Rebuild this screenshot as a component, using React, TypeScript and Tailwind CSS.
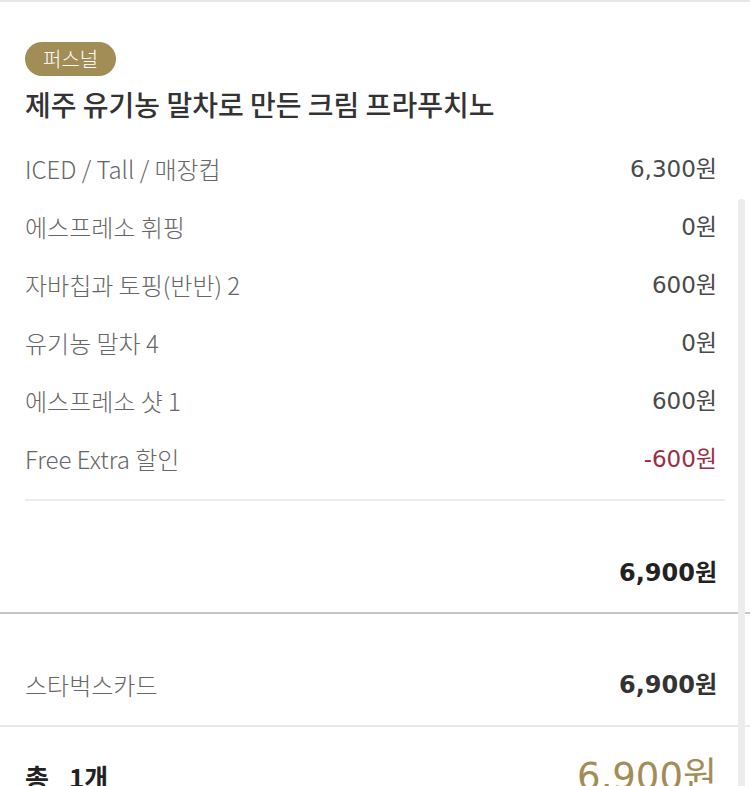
const kr = "font-['Noto_Sans_CJK_KR','Noto_Sans',sans-serif]";
const num = "font-['DejaVu_Sans','Noto_Sans_CJK_KR',sans-serif]";

const options = [
  { label: "ICED / Tall / 매장컵", price: "6,300원" },
  { label: "에스프레소 휘핑", price: "0원" },
  { label: "자바칩과 토핑(반반) 2", price: "600원" },
  { label: "유기농 말차 4", price: "0원" },
  { label: "에스프레소 샷 1", price: "600원" },
  { label: "Free Extra 할인", price: "-600원", discount: true },
];

export default function App() {
  return (
    <div className={`relative w-[750px] h-[786px] overflow-hidden bg-white ${kr}`}>
      <div className="h-[2px] bg-[#e6e6e6]" />

      {/* Order item */}
      <section className="px-[25px] pt-[40px]">
        <span className="inline-flex h-[34px] items-center rounded-full bg-[#a38d56] px-[18px] text-[20px] font-light text-white">
          퍼스널
        </span>
        <h2 className="mt-[11px] text-[28px] leading-[34px] font-medium text-[#333]">
          제주 유기농 말차로 만든 크림 프라푸치노
        </h2>

        <ul className="mt-[19px] pr-[8px]">
          {options.map((o) => (
            <li key={o.label} className="flex h-[58px] items-center justify-between text-[24px] font-light">
              <span className="text-[#666]">{o.label}</span>
              <span className={`${num} text-[23px] font-normal ${o.discount ? "text-[#9c2c44]" : "text-[#4a4a4a]"}`}>
                {o.price}
              </span>
            </li>
          ))}
        </ul>

        <div className="mt-[11px] h-[2px] bg-[#ececec]" />
        <div className="flex h-[111px] items-center justify-end pr-[8px] pt-[32px]">
          <span className={`${num} text-[24px] font-bold text-[#222]`}>6,900원</span>
        </div>
      </section>

      <div className="h-[2px] bg-[#c6c6c6]" />

      {/* Payment */}
      <div className="flex h-[111px] items-center justify-between pl-[25px] pr-[33px] pt-[30px]">
        <span className="text-[24px] font-light text-[#666]">스타벅스카드</span>
        <span className={`${num} text-[24px] font-bold text-[#333]`}>6,900원</span>
      </div>
      <div className="h-[2px] bg-[#e9e9e9]" />

      {/* Total */}
      <div className="flex items-center justify-between pl-[25px] pr-[33px] pt-[22px]">
        <span className="text-[26px] font-bold text-[#222]">
          총<span className="ml-[20px]">1개</span>
        </span>
        <span className={`${num} text-[37px] text-[#a38d56]`}>6,900원</span>
      </div>

      {/* scrollbar overlay */}
      <div className="absolute right-[5px] top-[199px] bottom-0 w-[7px] rounded-t-full bg-[#ececec]" />
    </div>
  );
}
